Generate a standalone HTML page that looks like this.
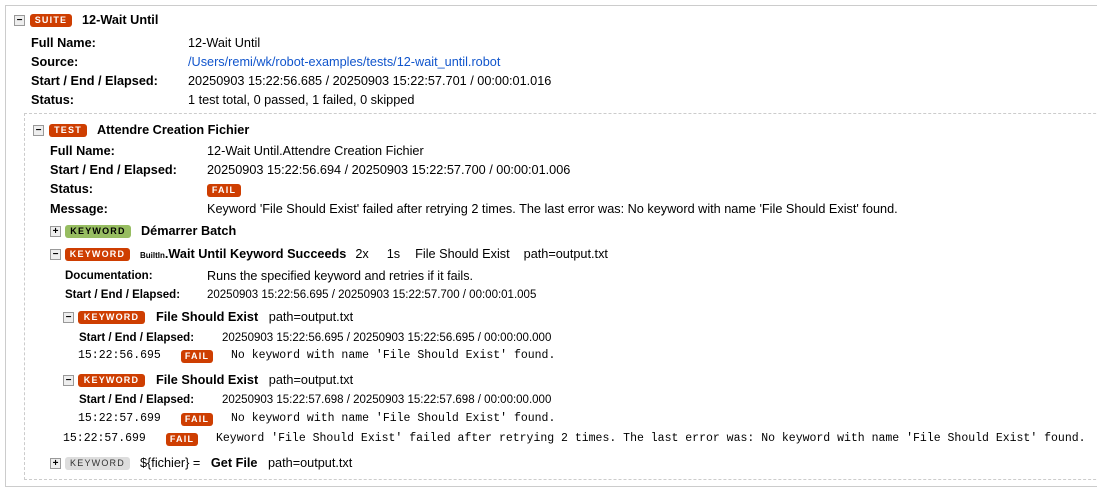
<!DOCTYPE html>
<html><head><meta charset="utf-8"><style>
body{margin:0;width:1097px;height:492px;background:#fff;font-family:"Liberation Sans",Arial,sans-serif;color:#000;position:relative;overflow:hidden}
.a{position:absolute;white-space:nowrap;font-size:12.7px;line-height:14px}
.b{font-weight:bold}
.s{font-size:11.5px}
.m{font-family:"Liberation Mono",monospace;font-size:11.5px}
.bx{position:absolute;width:9px;height:9px;border:1px solid #999;background:#eee;font-size:10px;line-height:9px;text-align:center;font-weight:bold;color:#000}
.bd{position:absolute;height:13px;border-radius:3px;background:#ce3e01;color:#fff;font-weight:bold;font-size:9px;letter-spacing:1.2px;line-height:13px;text-align:center}
.g{background:#97bd61;color:#000}
.gr{background:#ddd;color:#333;font-weight:normal}
a{color:#15c;text-decoration:none}
</style></head><body>
<div style="position:absolute;left:5px;top:5px;width:1200px;height:480px;border:1px solid #ccc"></div>
<div style="position:absolute;left:24px;top:113px;width:1200px;height:365px;border:1px dashed #ccc"></div>

<div class="bx" style="left:14px;top:15px">−</div>
<div class="bd" style="left:30px;top:14px;width:42px">SUITE</div>
<div class="a b" style="left:82px;top:13px">12-Wait Until</div>
<div class="a b" style="left:31px;top:36px">Full Name:</div><div class="a" style="left:188px;top:36px">12-Wait Until</div>
<div class="a b" style="left:31px;top:55px">Source:</div><div class="a" style="left:188px;top:55px"><a>/Users/remi/wk/robot-examples/tests/12-wait_until.robot</a></div>
<div class="a b" style="left:31px;top:74px">Start / End / Elapsed:</div><div class="a" style="left:188px;top:74px">20250903 15:22:56.685 / 20250903 15:22:57.701 / 00:00:01.016</div>
<div class="a b" style="left:31px;top:93px">Status:</div><div class="a" style="left:188px;top:93px">1 test total, 0 passed, 1 failed, 0 skipped</div>

<div class="bx" style="left:33px;top:125px">−</div>
<div class="bd" style="left:49px;top:124px;width:38px">TEST</div>
<div class="a b" style="left:97px;top:123px">Attendre Creation Fichier</div>
<div class="a b" style="left:50px;top:144px">Full Name:</div><div class="a" style="left:207px;top:144px">12-Wait Until.Attendre Creation Fichier</div>
<div class="a b" style="left:50px;top:163px">Start / End / Elapsed:</div><div class="a" style="left:207px;top:163px">20250903 15:22:56.694 / 20250903 15:22:57.700 / 00:00:01.006</div>
<div class="a b" style="left:50px;top:182px">Status:</div><div class="bd" style="left:207px;top:184px;width:34px">FAIL</div>
<div class="a b" style="left:50px;top:202px">Message:</div><div class="a" style="left:207px;top:202px">Keyword 'File Should Exist' failed after retrying 2 times. The last error was: No keyword with name 'File Should Exist' found.</div>

<div class="bx" style="left:50px;top:226px">+</div>
<div class="bd g" style="left:65px;top:225px;width:66px">KEYWORD</div>
<div class="a b" style="left:141px;top:224px">Démarrer Batch</div>

<div class="bx" style="left:50px;top:249px">−</div>
<div class="bd" style="left:65px;top:248px;width:65px">KEYWORD</div>
<div class="a" style="left:140px;top:247px"><span style="font-size:8px;font-weight:bold">BuiltIn</span><b>.Wait Until Keyword Succeeds</b><span style="margin-left:9px">2x</span><span style="margin-left:18px">1s</span><span style="margin-left:15px">File Should Exist</span><span style="margin-left:14px">path=output.txt</span></div>
<div class="a b s" style="left:65px;top:269px">Documentation:</div><div class="a s" style="left:207px;top:269px;font-size:12.6px">Runs the specified keyword and retries if it fails.</div>
<div class="a b s" style="left:65px;top:288px">Start / End / Elapsed:</div><div class="a s" style="left:207px;top:288px">20250903 15:22:56.695 / 20250903 15:22:57.700 / 00:00:01.005</div>

<div class="bx" style="left:63px;top:312px">−</div>
<div class="bd" style="left:78px;top:311px;width:67px">KEYWORD</div>
<div class="a" style="left:156px;top:310px"><b>File Should Exist</b>&nbsp;&nbsp; path=output.txt</div>
<div class="a b s" style="left:79px;top:331px">Start / End / Elapsed:</div><div class="a s" style="left:222px;top:331px">20250903 15:22:56.695 / 20250903 15:22:56.695 / 00:00:00.000</div>
<div class="a m" style="left:78px;top:349px">15:22:56.695</div><div class="bd" style="left:181px;top:350px;width:32px">FAIL</div><div class="a m" style="left:231px;top:349px">No keyword with name 'File Should Exist' found.</div>

<div class="bx" style="left:63px;top:375px">−</div>
<div class="bd" style="left:78px;top:374px;width:67px">KEYWORD</div>
<div class="a" style="left:156px;top:373px"><b>File Should Exist</b>&nbsp;&nbsp; path=output.txt</div>
<div class="a b s" style="left:79px;top:393px">Start / End / Elapsed:</div><div class="a s" style="left:222px;top:393px">20250903 15:22:57.698 / 20250903 15:22:57.698 / 00:00:00.000</div>
<div class="a m" style="left:78px;top:412px">15:22:57.699</div><div class="bd" style="left:181px;top:413px;width:32px">FAIL</div><div class="a m" style="left:231px;top:412px">No keyword with name 'File Should Exist' found.</div>

<div class="a m" style="left:63px;top:432px">15:22:57.699</div><div class="bd" style="left:166px;top:433px;width:32px">FAIL</div><div class="a m" style="left:216px;top:432px">Keyword 'File Should Exist' failed after retrying 2 times. The last error was: No keyword with name 'File Should Exist' found.</div>

<div class="bx" style="left:50px;top:458px">+</div>
<div class="bd gr" style="left:65px;top:457px;width:65px">KEYWORD</div>
<div class="a" style="left:140px;top:456px">${fichier} = &nbsp; <b>Get File</b>&nbsp;&nbsp; path=output.txt</div>
</body></html>
